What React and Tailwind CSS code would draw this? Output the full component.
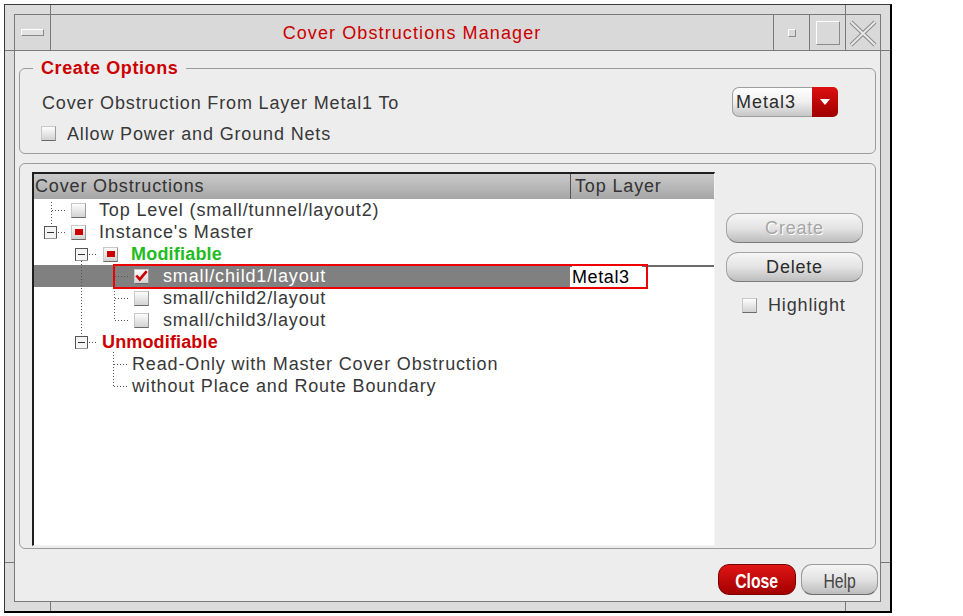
import React from "react";

const Box = ({ mark }) => (
  <span className="flex h-[15px] w-[15px] shrink-0 items-center justify-center border border-[#c8c8c8] border-b-[#6a6a6a] border-r-[#9a9a9a] bg-linear-to-b from-[#fdfdfd] to-[#d2d2d2]">
    {mark === "part" && <span className="h-[6px] w-[8px] bg-[#cc0000]" />}
    {mark === "check" && (
      <svg width="15" height="13" viewBox="0 0 15 13" className="-mt-[1px]">
        <path d="M1.5 6.5 L5.5 11 L13.5 1.5" fill="none" stroke="#cc0000" strokeWidth="3" />
      </svg>
    )}
  </span>
);

const Expander = ({ x, y }) => (
  <g>
    <rect x={x + 0.5} y={y + 0.5} width="12" height="12" fill="#f4f4f4" stroke="#555" />
    <line x1={x + 1} y1={y + 12.5} x2={x + 13} y2={y + 12.5} stroke="#999" />
    <line x1={x + 3} y1={y + 6.5} x2={x + 10} y2={y + 6.5} stroke="#333" />
  </g>
);

const Dots = (props) => (
  <line {...props} stroke="#555" strokeDasharray="1 2" strokeWidth="1" />
);

const Row = ({ pad, children, selected, cell }) => (
  <div className="flex h-[22px]">
    <div
      className={`flex w-[536px] shrink-0 items-center ${pad} ${
        selected ? "bg-[#808080] text-white" : ""
      }`}
    >
      {children}
    </div>
    <div
      className={`flex flex-1 items-center ${
        selected ? "border-t-2 border-[#6c6c6c]" : ""
      }`}
    >
      {cell && <span className="ml-[2px] bg-white pr-[12px] tracking-[0.6px] text-black">{cell}</span>}
    </div>
  </div>
);

const Pill = ({ children, disabled }) => (
  <button
    type="button"
    className={`h-[30px] w-[137px] rounded-[12px] border border-[#a4a4a4] border-b-[#7c7c7c] bg-linear-to-b from-[#f6f6f6] via-[#e4e4e4] to-[#bdbdbd] text-[18px] tracking-[0.8px] ${
      disabled ? "text-[#a6a6a6] [text-shadow:1px_1px_0_#fff]" : "text-[#2c2c2c]"
    }`}
  >
    {children}
  </button>
);

export default function App() {
  return (
    <div className="relative h-[616px] w-[963px] overflow-hidden bg-white pl-[4px] pt-[4px] font-['Liberation_Sans',Arial,sans-serif] text-[18px] tracking-[0.85px] text-[#383838]">
      <div className="relative h-[609px] w-[888px] border-l border-t border-[#3a3a3a] border-b-2 border-r-2 border-b-black border-r-black bg-[#dcdcdc] p-[9px]">
        {/* frame corner marks */}
        <span className="absolute left-[45px] top-0 h-[9px] w-px bg-[#777]" />
        <span className="absolute left-[840px] top-0 h-[9px] w-px bg-[#777]" />
        <span className="absolute left-0 top-[45px] h-px w-[9px] bg-[#777]" />
        <span className="absolute right-0 top-[45px] h-px w-[9px] bg-[#777]" />
        <span className="absolute bottom-[48px] left-0 h-px w-[9px] bg-[#777]" />
        <span className="absolute bottom-[48px] right-0 h-px w-[9px] bg-[#777]" />
        <span className="absolute bottom-0 left-[45px] h-[9px] w-px bg-[#777]" />
        <span className="absolute bottom-0 left-[840px] h-[9px] w-px bg-[#777]" />

        <div className="flex h-full flex-col border border-[#7a7a7a]">
          {/* title bar */}
          <div className="flex h-[36px] shrink-0 border-b border-[#7a7a7a] bg-[#d9d9d9]">
            <div className="flex w-[36px] items-center justify-center border-r border-[#7a7a7a]">
              <span className="h-[7px] w-[23px] border border-[#8a8a8a] border-t-white border-l-white bg-[#e2e2e2]" />
            </div>
            <div className="flex flex-1 items-center justify-center pt-[2px] tracking-[1.1px] text-[#cc0000]">
              Cover Obstructions Manager
            </div>
            <div className="flex w-[36px] items-center justify-center border-l border-[#7a7a7a]">
              <span className="h-[8px] w-[8px] border border-[#8a8a8a] border-t-white border-l-white" />
            </div>
            <div className="flex w-[36px] items-center justify-center border-l border-[#7a7a7a]">
              <span className="h-[24px] w-[24px] border border-[#8a8a8a] border-t-white border-l-white" />
            </div>
            <div className="flex w-[35px] items-center justify-center border-l border-[#7a7a7a]">
              <svg width="28" height="28" viewBox="0 0 28 28">
                <path d="M2 3 L26 26 M26 3 L2 26" stroke="#8a8a8a" strokeWidth="4" />
                <path d="M2 3 L26 26 M26 3 L2 26" stroke="#e8e8e8" strokeWidth="2" />
              </svg>
            </div>
          </div>

          {/* content */}
          <div className="flex flex-1 flex-col bg-[#ededed] px-[4px]">
            <fieldset className="mt-[8px] h-[95px] rounded-[6px] border border-[#9c9c9c] pl-[22px] pr-[37px]">
              <legend className="-ml-[9px] px-[8px] text-[18px] font-bold leading-[18px] tracking-[0.6px] text-[#cc0000]">
                Create Options
              </legend>
              <div className="mt-[10px] flex h-[30px] items-center justify-between">
                <span className="pt-[2px]">Cover Obstruction From Layer Metal1 To</span>
                <div className="flex h-[30px] w-[106px]">
                  <div className="flex flex-1 items-center rounded-l-[7px] border border-r-0 border-[#9e9e9e] bg-linear-to-b from-white via-[#efefef] to-[#c6c6c6] pl-[3px] tracking-[1px] text-[#2c2c2c]">
                    Metal3
                  </div>
                  <div className="flex w-[26px] items-center justify-center rounded-r-[5px] bg-linear-to-b from-[#dd1010] to-[#a00000]">
                    <svg width="10" height="6" viewBox="0 0 10 6">
                      <path d="M0 0 L10 0 L5 6 Z" fill="#fff" />
                    </svg>
                  </div>
                </div>
              </div>
              <div className="mt-[5px] flex h-[22px] items-center gap-[11px] -ml-[1px]">
                <Box />
                <span className="pt-[2px]">Allow Power and Ground Nets</span>
              </div>
            </fieldset>

            <div className="mt-[9px] flex h-[386px] gap-[11px] rounded-[6px] border border-[#9c9c9c] pb-[2px] pl-[12px] pr-[12px] pt-[8px]">
              {/* list */}
              <div className="flex w-[684px] flex-col border-l-2 border-t-2 border-[#1e1e1e] border-b border-r border-b-[#f4f4f4] border-r-[#f4f4f4] bg-white">
                <div className="flex h-[25px] shrink-0 bg-linear-to-b from-[#cacaca] to-[#a6a6a6] pr-[3px] text-[#333]">
                  <div className="flex w-[536px] items-center pl-[1px]">Cover Obstructions</div>
                  <div className="flex flex-1 items-center border-l border-[#555] pl-[4px]">Top Layer</div>
                </div>
                <div className="relative flex-1">
                  <svg width="540" height="200" className="pointer-events-none absolute left-0 top-0">
                    <Dots x1="17.5" y1="3" x2="17.5" y2="27" />
                    <Dots x1="18" y1="11.5" x2="32" y2="11.5" />
                    <Dots x1="24" y1="33.5" x2="32" y2="33.5" />
                    <Dots x1="55" y1="55.5" x2="63" y2="55.5" />
                    <Dots x1="47.5" y1="62" x2="47.5" y2="137" />
                    <Dots x1="55" y1="143.5" x2="63" y2="143.5" />
                    <Dots x1="80.5" y1="77" x2="80.5" y2="121" />
                    <Dots x1="81" y1="77.5" x2="96" y2="77.5" />
                    <Dots x1="81" y1="99.5" x2="96" y2="99.5" />
                    <Dots x1="81" y1="121.5" x2="96" y2="121.5" />
                    <Dots x1="79.5" y1="153" x2="79.5" y2="187" />
                    <Dots x1="80" y1="165.5" x2="94" y2="165.5" />
                    <Dots x1="80" y1="187.5" x2="94" y2="187.5" />
                    <Expander x={10} y={27} />
                    <Expander x={41} y={49} />
                    <Expander x={41} y={137} />
                  </svg>
                  <Row pad="pl-[37px] gap-[13px]">
                    <Box />
                    <span>Top Level (small/tunnel/layout2)</span>
                  </Row>
                  <Row pad="pl-[37px] gap-[13px]">
                    <Box mark="part" />
                    <span>Instance's Master</span>
                  </Row>
                  <Row pad="pl-[69px] gap-[13px]">
                    <Box mark="part" />
                    <span className="font-bold tracking-[0.2px] text-[#22bb22]">Modifiable</span>
                  </Row>
                  <Row pad="pl-[100px] gap-[14px]" selected cell="Metal3">
                    <Box mark="check" />
                    <span>small/child1/layout</span>
                  </Row>
                  <Row pad="pl-[100px] gap-[14px]">
                    <Box />
                    <span>small/child2/layout</span>
                  </Row>
                  <Row pad="pl-[100px] gap-[14px]">
                    <Box />
                    <span>small/child3/layout</span>
                  </Row>
                  <Row pad="pl-[68px]">
                    <span className="font-bold tracking-[0.15px] text-[#cc0000]">Unmodifiable</span>
                  </Row>
                  <Row pad="pl-[98px]">
                    <span>Read-Only with Master Cover Obstruction</span>
                  </Row>
                  <Row pad="pl-[98px]">
                    <span>without Place and Route Boundary</span>
                  </Row>
                  <span className="pointer-events-none absolute left-[79px] top-[65px] h-[25px] w-[535px] border-2 border-[#ee0000]" />
                </div>
              </div>

              {/* side buttons */}
              <div className="flex w-[137px] flex-col pt-[41px]">
                <Pill disabled>Create</Pill>
                <div className="mt-[9px]">
                  <Pill>Delete</Pill>
                </div>
                <div className="mt-[9px] flex h-[28px] items-center gap-[11px] pl-[16px]">
                  <Box />
                  <span>Highlight</span>
                </div>
              </div>
            </div>

            <div className="flex flex-1 items-center justify-end gap-[5px]">
              <button
                type="button"
                className="mt-[8px] h-[31px] w-[78px] rounded-[11px] border border-[#7a0000] bg-linear-to-b from-[#e01515] to-[#a30000] text-[21px] font-bold tracking-normal text-white"
              >
                <span className="inline-block scale-x-[0.75]">Close</span>
              </button>
              <button
                type="button"
                className="mt-[8px] -mr-[2px] h-[31px] w-[77px] rounded-[11px] border border-[#9a9a9a] border-b-[#6c6c6c] bg-linear-to-b from-[#f6f6f6] via-[#e2e2e2] to-[#bcbcbc] text-[21px] tracking-normal text-[#444]"
              >
                <span className="inline-block scale-x-[0.75]">Help</span>
              </button>
            </div>
          </div>
        </div>
      </div>
    </div>
  );
}
